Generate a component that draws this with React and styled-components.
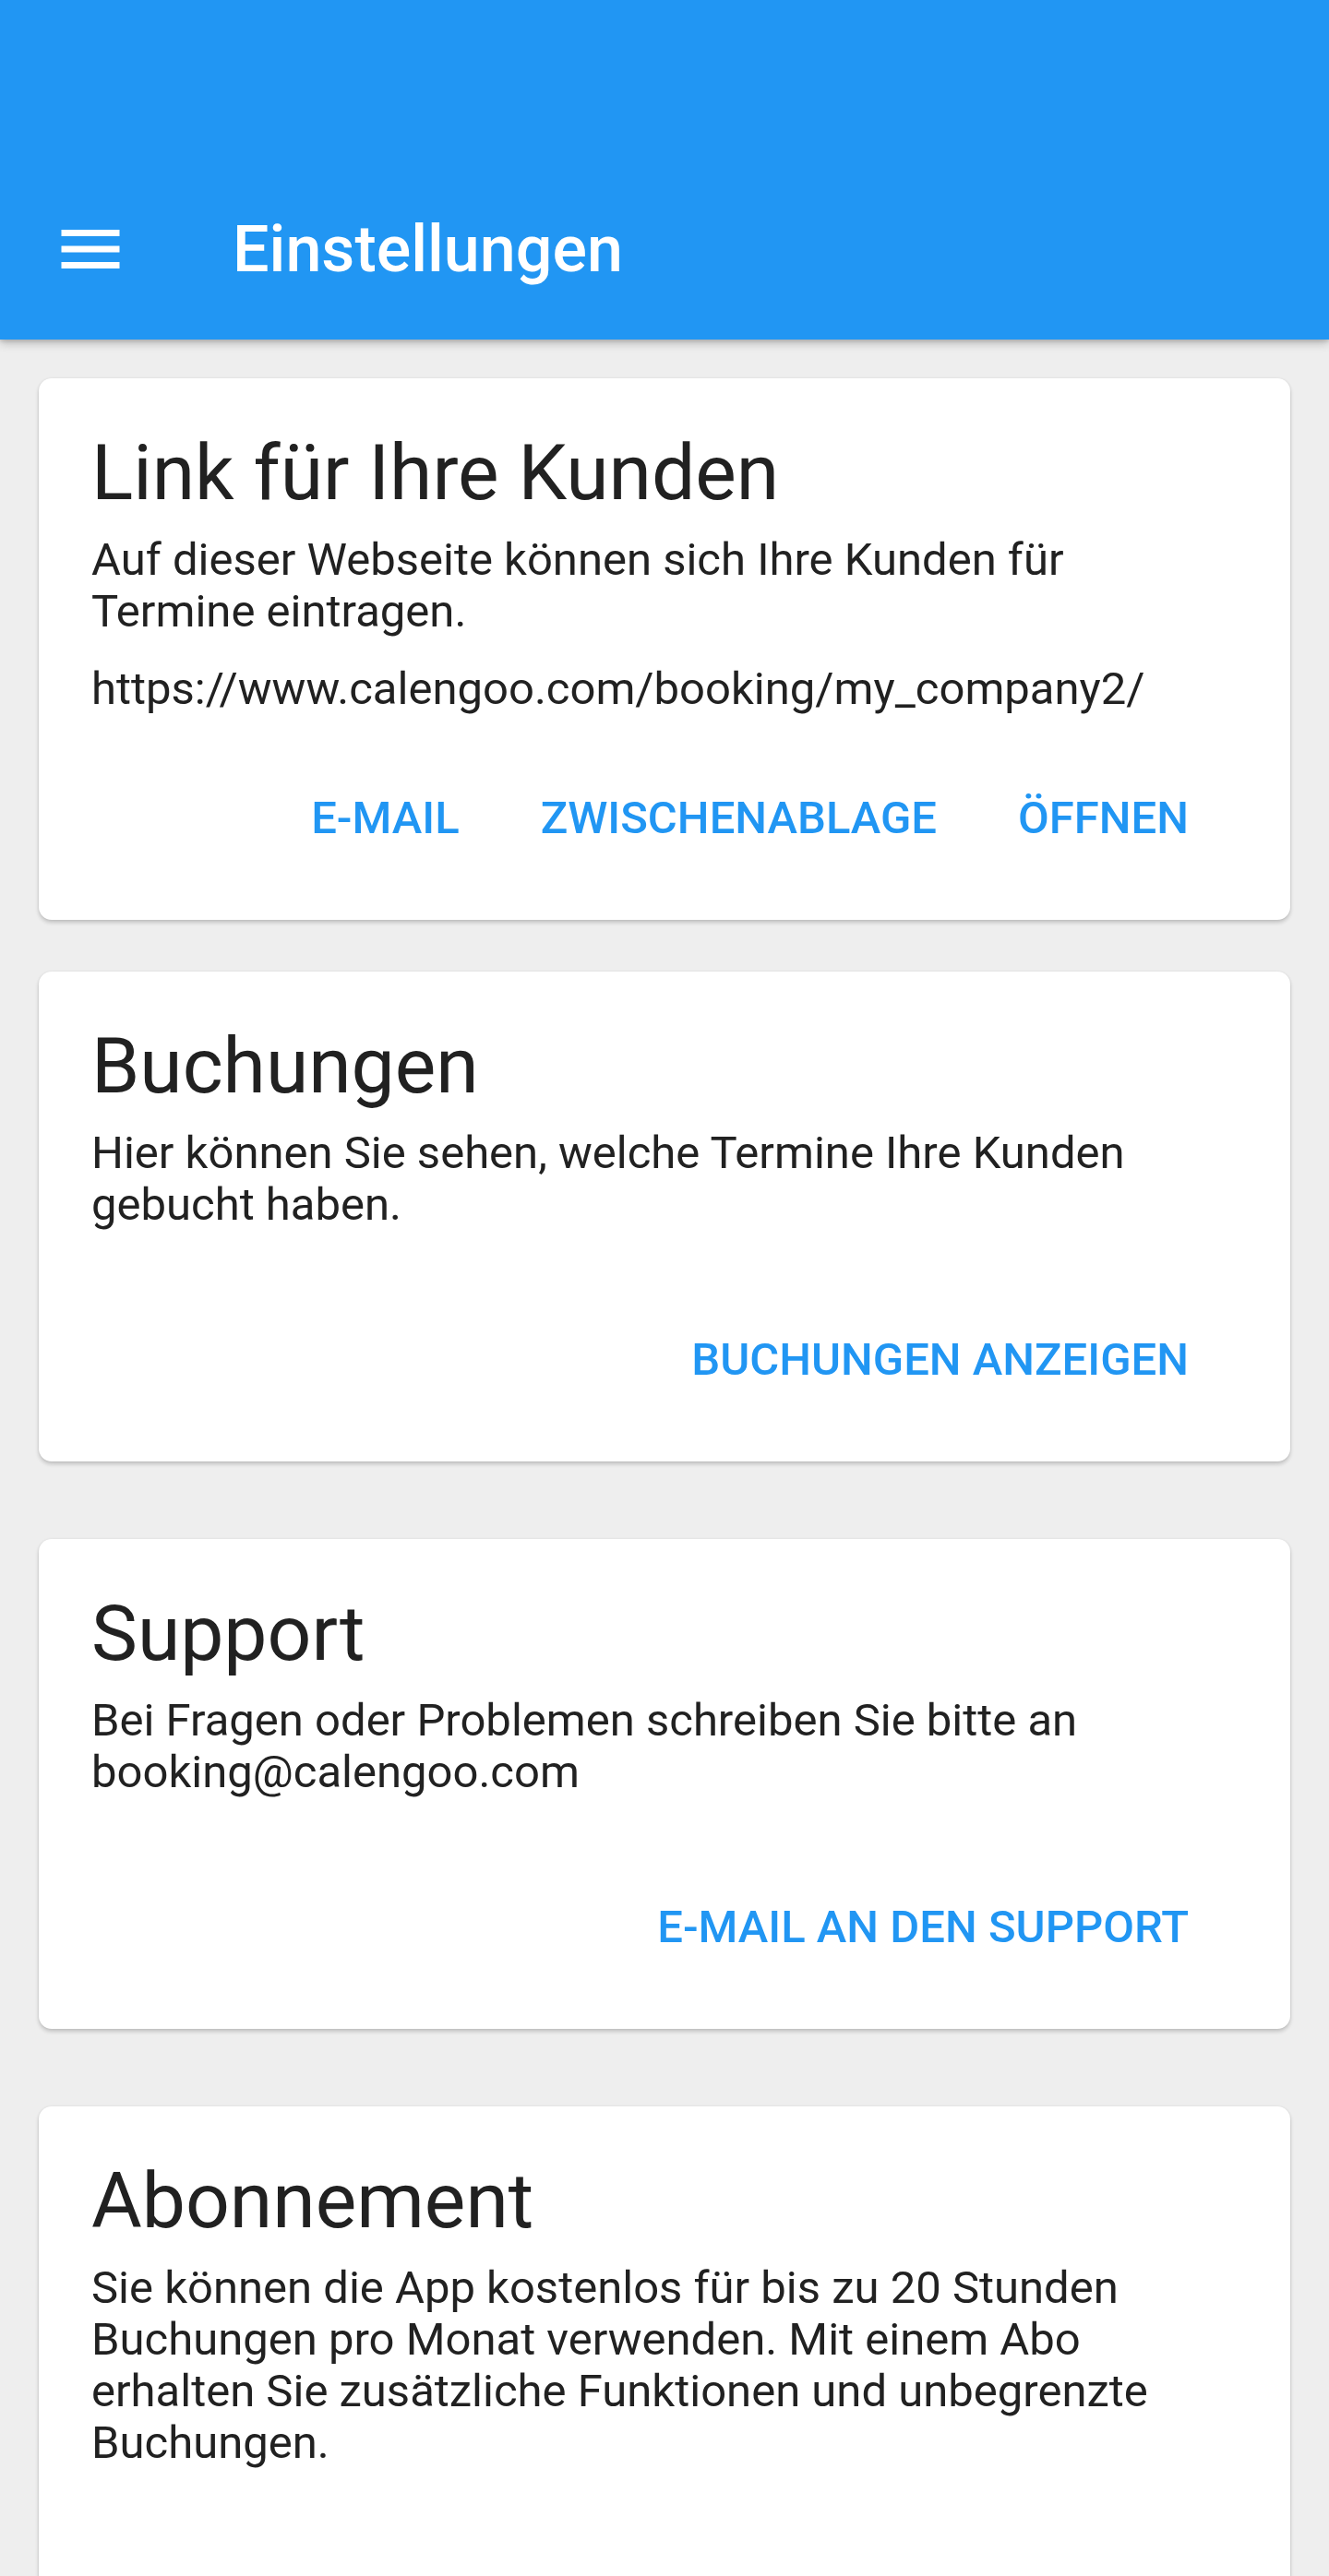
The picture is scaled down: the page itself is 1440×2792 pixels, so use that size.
import styled, { createGlobalStyle } from "styled-components";

const GlobalStyle = createGlobalStyle`
  html, body {
    margin: 0;
    padding: 0;
    background: #eeeeee;
    font-family: Roboto, "Noto Sans", "Liberation Sans", sans-serif;
    -webkit-font-smoothing: antialiased;
  }
`;

const cards = [
  {
    title: "Link für Ihre Kunden",
    text: "Auf dieser Webseite können sich Ihre Kunden für Termine eintragen.",
    link: "https://www.calengoo.com/booking/my_company2/",
    actions: ["E-Mail", "Zwischenablage", "Öffnen"],
    actionsTop: 84,
    after: 56,
  },
  {
    title: "Buchungen",
    text: "Hier können Sie sehen, welche Termine Ihre Kunden gebucht haben.",
    actions: ["Buchungen anzeigen"],
    actionsTop: 112,
    after: 84,
  },
  {
    title: "Support",
    text: "Bei Fragen oder Problemen schreiben Sie bitte an booking@calengoo.com",
    actions: ["E-Mail an den Support"],
    actionsTop: 112,
    after: 84,
  },
  {
    title: "Abonnement",
    text: "Sie können die App kostenlos für bis zu 20 Stunden Buchungen pro Monat verwenden. Mit einem Abo erhalten Sie zusätzliche Funktionen und unbegrenzte Buchungen.",
    actions: [],
    actionsTop: 0,
    after: 0,
  },
];

const App = () => {
  return (
    <Page>
      <GlobalStyle />
      <Header>
        <Toolbar>
          <MenuButton aria-label="Menü">
            <svg width="84" height="84" viewBox="0 0 24 24" fill="#ffffff">
              <path d="M3 18h18v-2H3v2zm0-5h18v-2H3v2zm0-7v2h18V6H3z" />
            </svg>
          </MenuButton>
          <Title>Einstellungen</Title>
        </Toolbar>
      </Header>
      <Content>
        {cards.map((c) => (
          <Card key={c.title} $after={c.after} $last={c.actions.length === 0}>
            <CardTitle>{c.title}</CardTitle>
            <CardText>{c.text}</CardText>
            {c.link && <LinkText>{c.link}</LinkText>}
            {c.actions.length > 0 && (
              <Actions $top={c.actionsTop}>
                {c.actions.map((a) => (
                  <ActionButton key={a}>{a}</ActionButton>
                ))}
              </Actions>
            )}
          </Card>
        ))}
      </Content>
    </Page>
  );
};

const Page = styled.div`
  height: 2792px;
  overflow: hidden;
  background: #eeeeee;
`;

const Header = styled.header`
  position: relative;
  z-index: 1;
  height: 368px;
  background: #2196f3;
  display: flex;
  flex-direction: column;
  justify-content: flex-end;
  box-shadow: 0 4px 10px rgba(0, 0, 0, 0.22), 0 2px 4px rgba(0, 0, 0, 0.12);
`;

const Toolbar = styled.div`
  height: 196px;
  display: flex;
  align-items: center;
  padding-left: 56px;
`;

const MenuButton = styled.div`
  width: 84px;
  height: 84px;
  display: flex;
  svg {
    display: block;
  }
`;

const Title = styled.h1`
  margin: 0 0 0 112px;
  color: #ffffff;
  font-size: 70px;
  font-weight: 500;
  line-height: 82px;
`;

const Content = styled.main`
  padding: 42px 42px 0 42px;
  display: flex;
  flex-direction: column;
`;

const Card = styled.section`
  background: #ffffff;
  border-radius: 14px;
  padding: 54px 56px ${(p) => (p.$last ? "400px" : "0")} 57px;
  margin-bottom: ${(p) => p.$after}px;
  box-shadow: 0 3px 4px rgba(0, 0, 0, 0.18), 0 0 3px rgba(0, 0, 0, 0.08);
`;

const CardTitle = styled.h2`
  margin: 0;
  font-size: 84px;
  font-weight: 400;
  line-height: 98px;
  color: #212121;
`;

const CardText = styled.p`
  margin: 17px 0 0;
  max-width: 1190px;
  font-size: 49px;
  line-height: 56px;
  color: #212121;
`;

const LinkText = styled.p`
  margin: 28px 0 0;
  font-size: 49px;
  line-height: 56px;
  color: #212121;
`;

const Actions = styled.div`
  display: flex;
  justify-content: flex-end;
  gap: 88px;
  margin-top: ${(p) => p.$top}px;
  padding: 0 54px 82px 0;
`;

const ActionButton = styled.button`
  border: none;
  background: none;
  padding: 0;
  font-family: inherit;
  font-size: 49px;
  font-weight: 500;
  line-height: 56px;
  text-transform: uppercase;
  color: #2196f3;
  cursor: pointer;
`;

export default App;
